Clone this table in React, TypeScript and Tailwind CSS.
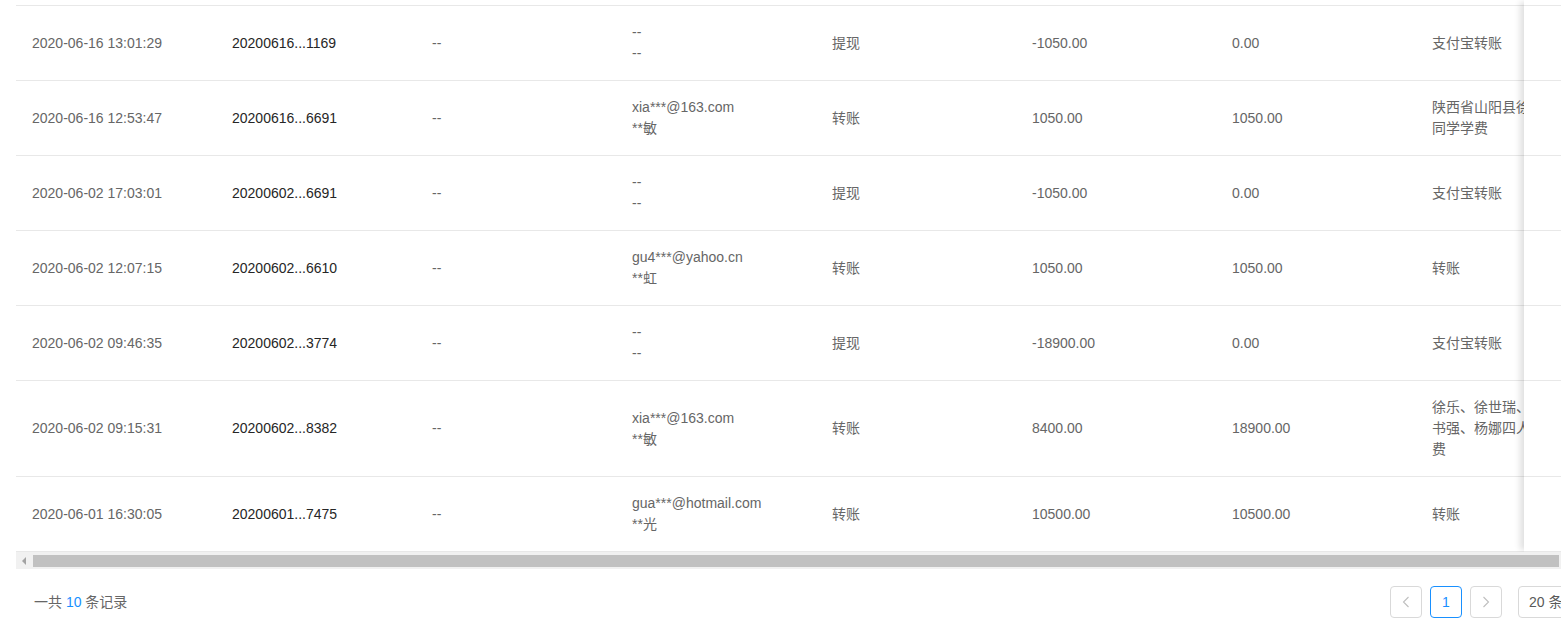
import React from "react";

type Row = {
  t: string;
  no: string;
  c3: string;
  c4: string[];
  type: string;
  amt: string;
  bal: string;
  note: string[];
  h: string;
};

const rows: Row[] = [
  { t: "2020-06-16 13:01:29", no: "20200616...1169", c3: "--", c4: ["--", "--"], type: "提现", amt: "-1050.00", bal: "0.00", note: ["支付宝转账"], h: "h-[75px]" },
  { t: "2020-06-16 12:53:47", no: "20200616...6691", c3: "--", c4: ["xia***@163.com", "**敏"], type: "转账", amt: "1050.00", bal: "1050.00", note: ["陕西省山阳县徐家店中学徐", "同学学费"], h: "h-[75px]" },
  { t: "2020-06-02 17:03:01", no: "20200602...6691", c3: "--", c4: ["--", "--"], type: "提现", amt: "-1050.00", bal: "0.00", note: ["支付宝转账"], h: "h-[75px]" },
  { t: "2020-06-02 12:07:15", no: "20200602...6610", c3: "--", c4: ["gu4***@yahoo.cn", "**虹"], type: "转账", amt: "1050.00", bal: "1050.00", note: ["转账"], h: "h-[75px]" },
  { t: "2020-06-02 09:46:35", no: "20200602...3774", c3: "--", c4: ["--", "--"], type: "提现", amt: "-18900.00", bal: "0.00", note: ["支付宝转账"], h: "h-[75px]" },
  { t: "2020-06-02 09:15:31", no: "20200602...8382", c3: "--", c4: ["xia***@163.com", "**敏"], type: "转账", amt: "8400.00", bal: "18900.00", note: ["徐乐、徐世瑞、徐世杰、徐", "书强、杨娜四人的下学期学", "费"], h: "h-[96px]" },
  { t: "2020-06-01 16:30:05", no: "20200601...7475", c3: "--", c4: ["gua***@hotmail.com", "**光"], type: "转账", amt: "10500.00", bal: "10500.00", note: ["转账"], h: "h-[75px]" },
];

function Cell({ children, dark }: { children: React.ReactNode; dark?: boolean }) {
  return (
    <div
      className={
        "w-[200px] shrink-0 px-4 py-4 leading-[21px] whitespace-nowrap " +
        (dark ? "text-[#262626]" : "text-[#666666]")
      }
    >
      {children}
    </div>
  );
}

function Lines({ lines }: { lines: string[] }) {
  return (
    <>
      {lines.map((l, i) => (
        <div key={i}>{l}</div>
      ))}
    </>
  );
}

export default function App() {
  return (
    <div
      className="w-[1561px] h-[629px] overflow-hidden bg-white text-[14px]"
      style={{ fontFamily: '"Liberation Sans", "Noto Sans CJK SC", sans-serif' }}
    >
      <div className="w-[1640px] pl-4">
        <div className="w-[1562px]">
          <div className="flex">
            {/* scrolling part of the table */}
            <div className="w-[1508px] shrink-0 overflow-hidden">
              <div className="w-[1600px]">
                <div className="h-[6px] border-b border-[#e8e8e8]" />
                {rows.map((r, i) => (
                  <div key={i} className={"flex items-center border-b border-[#e8e8e8] " + r.h}>
                    <Cell>{r.t}</Cell>
                    <Cell dark>{r.no}</Cell>
                    <Cell>{r.c3}</Cell>
                    <Cell>
                      <Lines lines={r.c4} />
                    </Cell>
                    <Cell>{r.type}</Cell>
                    <Cell>{r.amt}</Cell>
                    <Cell>{r.bal}</Cell>
                    <Cell>
                      <Lines lines={r.note} />
                    </Cell>
                  </div>
                ))}
              </div>
            </div>
            {/* fixed right column */}
            <div className="relative w-[54px] shrink-0 bg-white shadow-[-6px_0_6px_-2px_rgba(0,0,0,0.12)]">
              <div className="h-[6px] border-b border-[#e8e8e8]" />
              {rows.map((r, i) => (
                <div key={i} className={"border-b border-[#e8e8e8] " + r.h} />
              ))}
            </div>
          </div>
          {/* horizontal scrollbar */}
          <div className="relative flex h-[17px] items-center bg-[#f1f1f1]">
            <div className="flex w-[17px] h-[17px] shrink-0 items-center justify-center">
              <div className="ml-[-2px] h-0 w-0 border-y-[4px] border-r-[4px] border-y-transparent border-r-[#a3a3a3]" />
            </div>
            <div className="h-[12px] w-[1526px] shrink-0 bg-[#c1c1c1]" />
          </div>
        </div>

        {/* footer */}
        <div className="mt-[17px] flex w-[1608px] items-center justify-between pr-4">
          <div className="pl-[18px] text-[#666666]">
            一共 <span className="text-[#1890ff]">10</span> 条记录
          </div>
          <div className="flex items-center">
            <div className="flex h-8 w-8 items-center justify-center rounded border border-[#d9d9d9] bg-white">
              <svg width="8" height="12" viewBox="0 0 8 12" fill="none">
                <path d="M6.5 1 L1.5 6 L6.5 11" stroke="#bfbfbf" strokeWidth="1.1" />
              </svg>
            </div>
            <div className="ml-2 flex h-8 w-8 items-center justify-center rounded border border-[#1890ff] bg-white text-[#1890ff]">
              1
            </div>
            <div className="ml-2 flex h-8 w-8 items-center justify-center rounded border border-[#d9d9d9] bg-white">
              <svg width="8" height="12" viewBox="0 0 8 12" fill="none">
                <path d="M1.5 1 L6.5 6 L1.5 11" stroke="#bfbfbf" strokeWidth="1.1" />
              </svg>
            </div>
            <div className="ml-4 flex h-8 w-[90px] items-center rounded border border-[#d9d9d9] bg-white pl-[10px] text-[#595959]">
              20 条/页
            </div>
          </div>
        </div>
      </div>
    </div>
  );
}
